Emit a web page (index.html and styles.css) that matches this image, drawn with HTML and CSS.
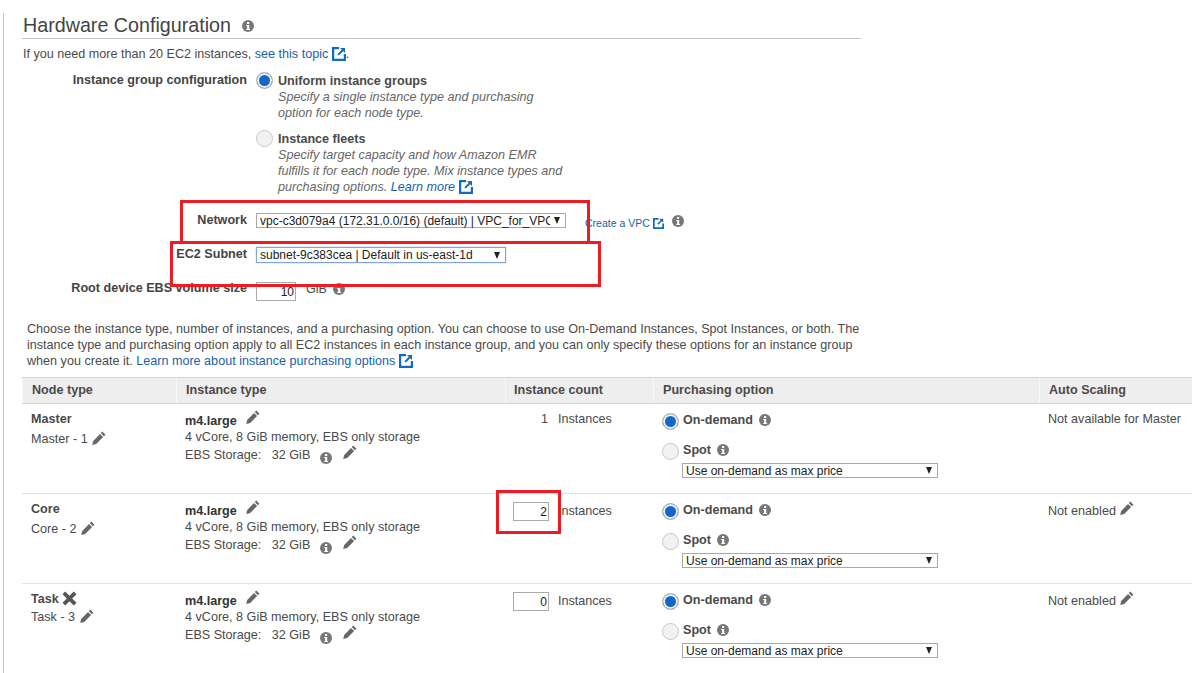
FILE: index.html
```html
<!DOCTYPE html>
<html lang="en">
<head>
    <meta charset="UTF-8">
    <title>Hardware Configuration</title>
    <link rel="stylesheet" href="styles.css">
</head>
<body>
    <svg class="defs" width="0" height="0">
        <symbol id="info" viewBox="0 0 12 12">
            <circle cx="6" cy="6" r="6" fill="#777"/>
            <rect x="5" y="2" width="2.2" height="2" fill="#fff"/>
            <path d="M4.2 5h3v4h.9v1H4.2V9h.9V6h-.9z" fill="#fff"/>
        </symbol>
        <symbol id="pencil" viewBox="0 0 14 14">
            <path d="M10.3 .6l3.1 3.1-1.5 1.5-3.1-3.1zM8 2.9l3.1 3.1-6.9 6.9-4 1 1-4z" fill="#666"/>
        </symbol>
        <symbol id="ext" viewBox="0 0 14 14">
            <path d="M7 1.1H1.1v11.8h11.8V7" fill="none" stroke="#116cc0" stroke-width="2.2"/>
            <path d="M8 1h5v5l-1.8-1.8-4.4 4.4-1.4-1.4 4.4-4.4z" fill="#116cc0"/>
        </symbol>
        <symbol id="cross" viewBox="0 0 14 14">
            <path d="M3 .5L7 4.5 11 .5 13.5 3 9.5 7l4 4-2.5 2.5-4-4-4 4L.5 11l4-4-4-4z" fill="#555"/>
        </symbol>
    </svg>

    <div class="page">
        <h2 class="title">Hardware Configuration <svg class="ico info title-info"><use href="#info"/></svg></h2>
        <p class="intro">If you need more than 20 EC2 instances, <a href="#">see this topic <svg class="ico ext"><use href="#ext"/></svg></a>.</p>

        <div class="form">
            <div class="form-row group-row">
                <div class="label">Instance group configuration</div>
                <div class="options">
                    <div class="option">
                        <span class="radio on"></span>
                        <div>
                            <div class="opt-name">Uniform instance groups</div>
                            <div class="opt-desc">Specify a single instance type and purchasing<br>option for each node type.</div>
                        </div>
                    </div>
                    <div class="option">
                        <span class="radio"></span>
                        <div>
                            <div class="opt-name">Instance fleets</div>
                            <div class="opt-desc">Specify target capacity and how Amazon EMR<br>fulfills it for each node type. Mix instance types and<br>purchasing options. <a href="#">Learn more <svg class="ico ext"><use href="#ext"/></svg></a></div>
                        </div>
                    </div>
                </div>
            </div>
            <div class="form-row network-row">
                <div class="label">Network</div>
                <div class="select network-select"><span class="select-text">vpc-c3d079a4 (172.31.0.0/16) (default) | VPC_for_VPC(</span><i class="arrow"></i></div>
                <a class="vpc-link" href="#">Create a VPC <svg class="ico ext small"><use href="#ext"/></svg></a>
                <svg class="ico info vpc-info"><use href="#info"/></svg>
            </div>
            <div class="form-row subnet-row">
                <div class="label">EC2 Subnet</div>
                <div class="select subnet-select"><span class="select-text">subnet-9c383cea | Default in us-east-1d</span><i class="arrow"></i></div>
            </div>
            <div class="form-row root-row">
                <div class="label">Root device EBS volume size</div>
                <div class="num root-num">10</div>
                <span class="gib">GiB</span>
                <svg class="ico info"><use href="#info"/></svg>
            </div>
        </div>

        <p class="para">Choose the instance type, number of instances, and a purchasing option. You can choose to use On-Demand Instances, Spot Instances, or both. The<br>instance type and purchasing option apply to all EC2 instances in each instance group, and you can only specify these options for an instance group<br>when you create it. <a href="#">Learn more about instance purchasing options <svg class="ico ext"><use href="#ext"/></svg></a></p>

        <div class="table">
            <div class="thead">
                <div>Node type</div>
                <div>Instance type</div>
                <div>Instance count</div>
                <div>Purchasing option</div>
                <div>Auto Scaling</div>
            </div>

            <div class="trow">
                <div class="node">
                    <div class="node-name">Master</div>
                    <div class="node-sub">Master - 1 <svg class="ico pencil"><use href="#pencil"/></svg></div>
                </div>
                <div class="itype">
                    <div class="itype-name">m4.large <svg class="ico pencil"><use href="#pencil"/></svg></div>
                    <div>4 vCore, 8 GiB memory, EBS only storage</div>
                    <div class="ebs">EBS Storage: &nbsp;&nbsp;32 GiB <svg class="ico info"><use href="#info"/></svg> <svg class="ico pencil"><use href="#pencil"/></svg></div>
                </div>
                <div class="count"><span class="count-val">1</span><span class="count-unit">Instances</span></div>
                <div class="purchase">
                    <div class="buy-row"><span class="radio on"></span><span class="buy-name">On-demand</span><svg class="ico info"><use href="#info"/></svg></div>
                    <div class="buy-row"><span class="radio"></span><span class="buy-name">Spot</span><svg class="ico info"><use href="#info"/></svg></div>
                    <div class="select price-select"><span class="select-text">Use on-demand as max price</span><i class="arrow"></i></div>
                </div>
                <div class="scaling master-scaling">Not available for Master</div>
            </div>

            <div class="trow">
                <div class="node">
                    <div class="node-name">Core</div>
                    <div class="node-sub">Core - 2 <svg class="ico pencil"><use href="#pencil"/></svg></div>
                </div>
                <div class="itype">
                    <div class="itype-name">m4.large <svg class="ico pencil"><use href="#pencil"/></svg></div>
                    <div>4 vCore, 8 GiB memory, EBS only storage</div>
                    <div class="ebs">EBS Storage: &nbsp;&nbsp;32 GiB <svg class="ico info"><use href="#info"/></svg> <svg class="ico pencil"><use href="#pencil"/></svg></div>
                </div>
                <div class="count"><div class="num count-num">2</div><span class="count-unit lower">Instances</span></div>
                <div class="purchase">
                    <div class="buy-row"><span class="radio on"></span><span class="buy-name">On-demand</span><svg class="ico info"><use href="#info"/></svg></div>
                    <div class="buy-row"><span class="radio"></span><span class="buy-name">Spot</span><svg class="ico info"><use href="#info"/></svg></div>
                    <div class="select price-select"><span class="select-text">Use on-demand as max price</span><i class="arrow"></i></div>
                </div>
                <div class="scaling">Not enabled <svg class="ico pencil"><use href="#pencil"/></svg></div>
            </div>

            <div class="trow">
                <div class="node">
                    <div class="node-name">Task <svg class="ico cross"><use href="#cross"/></svg></div>
                    <div class="node-sub task-sub">Task - 3 <svg class="ico pencil"><use href="#pencil"/></svg></div>
                </div>
                <div class="itype">
                    <div class="itype-name">m4.large <svg class="ico pencil"><use href="#pencil"/></svg></div>
                    <div>4 vCore, 8 GiB memory, EBS only storage</div>
                    <div class="ebs">EBS Storage: &nbsp;&nbsp;32 GiB <svg class="ico info"><use href="#info"/></svg> <svg class="ico pencil"><use href="#pencil"/></svg></div>
                </div>
                <div class="count"><div class="num count-num">0</div><span class="count-unit lower">Instances</span></div>
                <div class="purchase">
                    <div class="buy-row"><span class="radio on"></span><span class="buy-name">On-demand</span><svg class="ico info"><use href="#info"/></svg></div>
                    <div class="buy-row"><span class="radio"></span><span class="buy-name">Spot</span><svg class="ico info"><use href="#info"/></svg></div>
                    <div class="select price-select"><span class="select-text">Use on-demand as max price</span><i class="arrow"></i></div>
                </div>
                <div class="scaling">Not enabled <svg class="ico pencil"><use href="#pencil"/></svg></div>
            </div>
        </div>

        <!-- red annotation boxes drawn over the screenshot -->
        <div class="mark mark-network"></div>
        <div class="mark mark-subnet"></div>
        <div class="mark mark-count"></div>
    </div>
</body>
</html>
```

FILE: styles.css
```css
* {
    margin: 0;
    padding: 0;
    box-sizing: border-box;
}

html, body {
    height: 100%;
    overflow: hidden;
}

body {
    font-family: 'Liberation Sans', Arial, sans-serif;
    font-size: 12.6px;
    line-height: 16px;
    color: #4a4a4a;
    background: #fff;
}

a {
    color: #1a5fa8;
    text-decoration: none;
}

.defs {
    position: absolute;
}

.page {
    position: relative;
    width: 1189px;
    height: 660px;
    margin-top: 13px;
    margin-left: 3px;
    padding-left: 18px;
    border-left: 1px solid #c4c4c4;
}

.ico {
    display: inline-block;
    vertical-align: -2px;
}

.info {
    width: 12px;
    height: 12px;
}

.pencil {
    width: 14px;
    height: 14px;
}

.ext {
    width: 14px;
    height: 14px;
    vertical-align: -3px;
}

.ext.small {
    width: 11px;
    height: 11px;
    vertical-align: -2px;
}

.cross {
    width: 15px;
    height: 15px;
    vertical-align: -3px;
}

.title {
    width: 839px;
    height: 26px;
    padding-left: 1px;
    font-size: 19.7px;
    font-weight: normal;
    line-height: 24px;
    border-bottom: 1px solid #c4c4c4;
    color: #444;
}

.title-info {
    margin-left: 6px;
    vertical-align: 0;
}

.intro {
    margin-top: 7px;
    padding-left: 1px;
}

/* form block */
.form {
    margin-top: 10px;
}

.form-row {
    display: flex;
    align-items: flex-start;
}

.label {
    width: 225px;
    margin-right: 9px;
    text-align: right;
    font-weight: bold;
    color: #444;
}

.group-row {
    height: 141px;
}

.option {
    display: flex;
    gap: 5px;
    margin-bottom: 9px;
}

.opt-name {
    margin-top: 1px;
    font-weight: bold;
}

.opt-desc {
    font-style: italic;
    color: #666;
}

.radio {
    flex: none;
    display: inline-block;
    width: 17px;
    height: 17px;
    border: 1px solid #c8c8c8;
    border-radius: 50%;
    background: #f2f2f2;
}

.radio.on {
    background: #1268c4;
    box-shadow: inset 0 0 0 2px #f0f0f0;
    border-color: #bbb;
}

.select {
    display: flex;
    align-items: center;
    justify-content: space-between;
    height: 15px;
    padding: 0 5px 0 3px;
    border: 1px solid #a9a9a9;
    font-size: 12px;
    color: #222;
    background: #fff;
}

.select-text {
    white-space: nowrap;
    overflow-x: clip;
}

.arrow {
    flex: none;
    width: 0;
    height: 0;
    border-left: 3.5px solid transparent;
    border-right: 3.5px solid transparent;
    border-top: 7px solid #222;
}

.network-row {
    height: 34px;
}

.network-row .label {
    margin-top: -1px;
}

.network-select {
    width: 310px;
}

.network-select .select-text {
    width: 290px;
}

.vpc-link {
    font-size: 10.5px;
    margin: 2px 0 0 19px;
}

.vpc-info {
    margin: 2px 0 0 8px;
}

.subnet-row {
    height: 34px;
}

.subnet-row .label {
    margin-top: -1px;
}

.subnet-select {
    width: 250px;
    height: 16px;
    border-color: #7ea6d8;
    box-shadow: 0 0 1px #7ea6d8;
}

.num {
    height: 19px;
    border: 1px solid #aaa;
    text-align: right;
    padding-right: 1px;
    font-size: 12px;
    color: #222;
    line-height: 18px;
}

.root-row .label {
    margin-top: -1px;
}

.root-num {
    width: 40px;
    margin-top: 1px;
}

.gib {
    margin: 0 6px 0 10px;
}

.root-row .info {
    margin-top: 2px;
}

.para {
    margin-top: 20px;
    margin-left: 5px;
    white-space: nowrap;
}

/* table */
.table {
    margin-top: 8px;
    width: 1170px;
}

.thead,
.trow {
    display: grid;
    grid-template-columns: 154px 329px 148px 386px 153px;
}

.thead {
    height: 27px;
    border-top: 1px solid #d5d5d5;
    border-bottom: 1px solid #d5d5d5;
    background: #eee;
    font-weight: bold;
    line-height: 25px;
}

.thead div {
    padding-left: 9px;
    border-left: 1px solid #f8f8f8;
}

.thead div:nth-child(3) {
    padding-left: 8px;
}

.trow {
    height: 90px;
    border-bottom: 1px solid #e2e2e2;
    padding-top: 7px;
}

.trow:last-child {
    border-bottom: 0;
}

.node {
    padding-left: 9px;
}

.node-name {
    font-weight: bold;
}

.node-sub {
    margin-top: 4px;
}

.node-sub .pencil {
    margin-left: 1px;
}

.task-sub {
    margin-top: 2px;
}

.itype {
    padding: 2px 0 0 9px;
}

/* negative margins keep the icons from stretching the text lines */
.itype .ico,
.scaling .ico {
    margin-top: -4px;
    margin-bottom: -4px;
}

.itype-name {
    font-weight: bold;
    color: #333;
}

.itype-name .pencil {
    margin-left: 6px;
    vertical-align: 5px;
}

.ebs {
    margin-top: 2px;
}

.ebs .info {
    margin-left: 6px;
    margin-right: 7px;
    vertical-align: -1px;
}

.ebs .pencil {
    margin-left: 1px;
    vertical-align: 4px;
}

.count {
    display: flex;
    align-items: flex-start;
    gap: 9px;
    padding-left: 8px;
}

.count-val {
    width: 36px;
    padding-right: 1px;
    text-align: right;
}

.count-num {
    width: 36px;
    margin-top: 1px;
}

.count-unit {
    white-space: nowrap;
}

.count-unit.lower {
    margin-top: 2px;
}

.purchase {
    padding: 2px 0 0 9px;
}

.buy-row {
    display: flex;
    align-items: center;
    gap: 4px;
    height: 17px;
    margin-bottom: 13px;
}

.buy-name {
    margin-top: -3px;
    font-weight: bold;
}

.buy-row .info {
    margin: -3px 0 0 2px;
}

.price-select {
    width: 256px;
    margin: -10px 0 0 20px;
}

.scaling {
    padding: 2px 0 0 9px;
}

.scaling .pencil {
    margin-left: 1px;
    vertical-align: 4px;
}

.master-scaling {
    padding-top: 0;
}

.mark {
    position: absolute;
    border: 3px solid #ed1c24;
}

.mark-network {
    left: 176px;
    top: 187px;
    width: 410px;
    height: 44px;
}

.mark-subnet {
    left: 166px;
    top: 228px;
    width: 431px;
    height: 46px;
}

.mark-count {
    left: 492px;
    top: 477px;
    width: 65px;
    height: 44px;
}
```
